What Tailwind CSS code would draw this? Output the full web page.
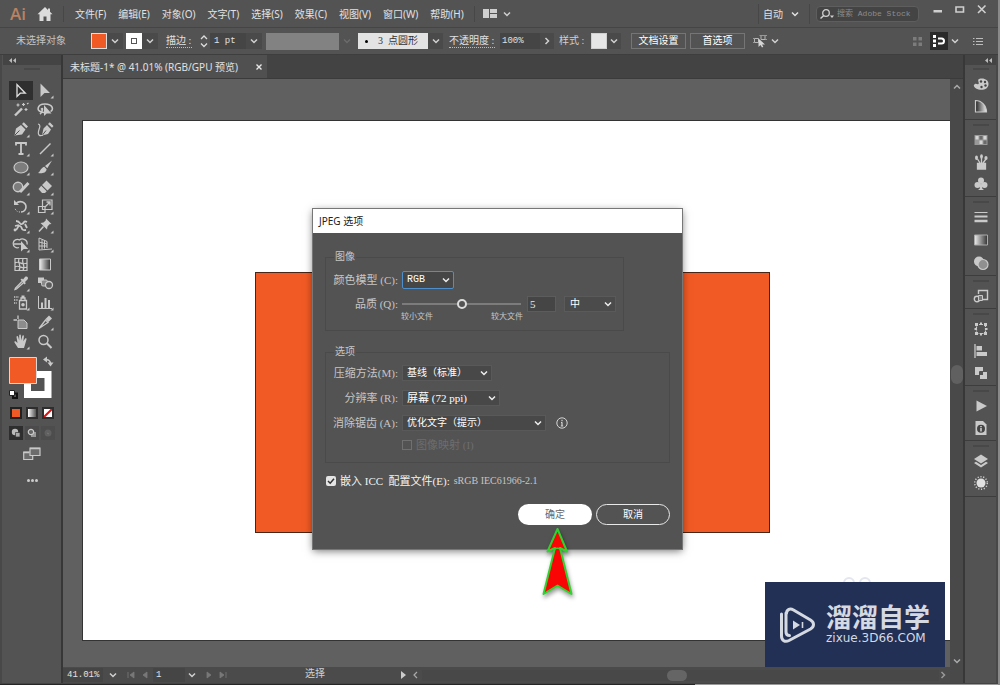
<!DOCTYPE html>
<html lang="zh-CN">
<head>
<meta charset="utf-8">
<title>JPEG 选项</title>
<script src="https://cdn.jsdelivr.net/npm/@tailwindcss/browser@4"></script>
</head>
<body class="h-screen overflow-hidden bg-[#2c2c2c] text-[#d0d0d0] text-[10px] leading-[14px] font-['Noto_Sans','Noto_Sans_CJK_SC',sans-serif]">

<!-- shared icons -->
<svg class="absolute size-0">
  <symbol id="chev" viewBox="0 0 8 8"><path d="M1 2.5 4 5.5 7 2.5" fill="none" stroke="currentColor" stroke-width="1.5"/></symbol>
  <symbol id="corner" viewBox="0 0 20 19"><path d="M18.5 14.5v3h-3z" fill="currentColor"/></symbol>
  <linearGradient id="g1"><stop offset="0" stop-color="#eee"/><stop offset="1" stop-color="#333"/></linearGradient>
  <linearGradient id="g2"><stop offset="0" stop-color="#222"/><stop offset="1" stop-color="#eee"/></linearGradient>
</svg>

<div class="flex h-full flex-col border-r-2 border-r-[#8a8a8a] bg-[#535353]">

  <!-- menu bar -->
  <header class="flex h-7 shrink-0 items-center border-b border-[#454545] pl-2.5 pr-2.5">
    <span class="w-[18px] font-['Open_Sans',sans-serif] text-[17px] font-semibold leading-6 text-[#b98262]">Ai</span>
    <button aria-label="主页" class="ml-[9px]"><svg class="size-4" viewBox="0 0 16 16"><path fill="#dcdcdc" d="M8 1 .5 8.200h2V15H6.500v-4.500h3V15h4V8.200h2L13 5.800V2.500h-2v1.400z"/></svg></button>
    <span class="ml-2.5 h-4 w-px bg-[#474747]"></span>
    <nav class="ml-[11px] flex gap-3 whitespace-nowrap text-[#e2e2e2]">
      <button>文件(F)</button><button>编辑(E)</button><button>对象(O)</button><button>文字(T)</button><button>选择(S)</button><button>效果(C)</button><button>视图(V)</button><button>窗口(W)</button><button>帮助(H)</button>
    </nav>
    <span class="ml-2.5 h-4 w-px bg-[#474747]"></span>
    <button aria-label="排列文档" class="ml-2 flex items-center gap-1.5"><svg class="h-[9px] w-[14px]" viewBox="0 0 14 9"><path fill="#cfcfcf" d="M0 0h6v9H0zM7 0h7v4H7zM7 5h7v4H7z"/></svg><svg class="size-2"><use href="#chev"/></svg></button>
    <div class="ml-auto flex items-center">
      <span class="h-5 w-px bg-[#474747]"></span>
      <button class="ml-1 flex items-center gap-2 text-[#e0e0e0]">自动 <svg class="size-2"><use href="#chev"/></svg></button>
      <span class="ml-2.5 h-5 w-px bg-[#474747]"></span>
      <label class="ml-1.5 flex h-4 w-[103px] items-center rounded-sm border border-[#5e5e5e] bg-[#444] pl-[2px]">
        <svg class="h-3 w-4 shrink-0" viewBox="0 0 16 12"><circle cx="7" cy="5" r="3.300" fill="none" stroke="#d0d0d0" stroke-width="1.300"/><path d="M4.800 7.500 1.500 10.500" stroke="#d0d0d0" stroke-width="1.500"/><path d="M11 7.500h4l-2 2.500z" fill="#d0d0d0"/></svg>
        <input aria-label="搜索 Adobe Stock" placeholder="搜索 Adobe Stock" class="w-full min-w-0 bg-transparent pl-0.5 font-['Liberation_Mono','Noto_Sans_CJK_SC',monospace] text-[8px] text-[#ddd] outline-none placeholder:text-[#8c8c8c]">
      </label>
      <button aria-label="最小化" class="ml-[13px] -mt-2"><svg class="h-3 w-3" viewBox="0 0 12 12"><path d="M1.500 6h8.500v2.500H1.500z" fill="#cfcfcf"/></svg></button>
      <button aria-label="最大化" class="ml-2.5 -mt-2"><svg class="h-3 w-3" viewBox="0 0 12 12"><path d="M2 3h7.500v5H2z" fill="none" stroke="#cfcfcf" stroke-width="1.600"/></svg></button>
      <button aria-label="关闭" class="ml-2.5 -mt-2"><svg class="h-3 w-3" viewBox="0 0 12 12"><path d="M2 1.500l7.500 7.500M9.500 1.500 2 9" stroke="#cfcfcf" stroke-width="1.600"/></svg></button>
    </div>
  </header>

  <!-- control bar -->
  <section class="flex h-[27px] shrink-0 items-center whitespace-nowrap border-b border-[#3e3e3e] pl-4 pr-[15px] font-['Liberation_Serif','Noto_Sans_CJK_SC',serif]">
    <span class="w-[75px] text-[#c4c4c4]">未选择对象</span>
    <button aria-label="填色" class="size-4 border border-[#ddd] bg-[#f15a24]"></button>
    <button aria-label="填色选项" class="flex h-4 w-4 items-center justify-center bg-[#4a4a4a]"><svg class="size-2"><use href="#chev"/></svg></button>
    <button aria-label="描边颜色" class="ml-[3px] flex size-4 items-center justify-center bg-white"><span class="size-[6px] border border-[#555]"></span></button>
    <button aria-label="描边选项" class="flex h-4 w-4 items-center justify-center bg-[#4a4a4a]"><svg class="size-2"><use href="#chev"/></svg></button>
    <label for="sw" class="ml-2 w-[26px] border-b border-dotted border-[#bbb] leading-3 text-[#e0e0e0]">描边 :</label>
    <svg class="ml-2 h-4 w-2" viewBox="0 0 8 16"><path d="M1 6 4 3 7 6M1 10.500 4 13.500 7 10.500" fill="none" stroke="#ddd" stroke-width="1.300"/></svg>
    <input id="sw" value="1 pt" class="ml-0.5 h-4 w-9 bg-[#454545] pl-1 font-['Liberation_Mono',monospace] text-[9px] text-[#e0e0e0]">
    <button aria-label="描边粗细" class="flex h-4 w-4 items-center justify-center bg-[#4a4a4a]"><svg class="size-2"><use href="#chev"/></svg></button>
    <span class="ml-1 h-[17px] w-[73px] bg-[#828282]"></span>
    <svg class="ml-1 size-2 text-[#6b6b6b]"><use href="#chev"/></svg>
    <button class="ml-[7px] flex h-4 w-[70px] items-center gap-2 bg-[#e3e3e3] pl-[7px] text-[#333]"><span class="size-[3px] rounded-full bg-black"></span><span class="pl-0.5">3&nbsp; 点圆形</span></button>
    <button aria-label="画笔" class="flex h-4 w-[15px] items-center justify-center bg-[#4a4a4a]"><svg class="size-2"><use href="#chev"/></svg></button>
    <label for="op" class="ml-1.5 w-[46px] border-b border-dotted border-[#bbb] leading-3 text-[#e0e0e0]">不透明度 :</label>
    <input id="op" value="100%" class="ml-[5px] h-4 w-10 bg-[#454545] pl-0.5 font-['Liberation_Mono',monospace] text-[9px] text-[#e0e0e0]">
    <button aria-label="不透明度滑块" class="flex h-4 w-[14px] items-center justify-center bg-[#4a4a4a]"><svg class="size-2 -rotate-90"><use href="#chev"/></svg></button>
    <span class="ml-[5px] w-8">样式 :</span>
    <button aria-label="图形样式" class="size-4 border border-[#d0d0d0] bg-[#e6e6e6]"></button>
    <button aria-label="样式选项" class="flex h-4 w-[14px] items-center justify-center bg-[#4a4a4a]"><svg class="size-2"><use href="#chev"/></svg></button>
    <button class="ml-2.5 h-4 w-[55px] border border-[#757575] leading-3 text-white">文档设置</button>
    <button class="ml-1 h-4 w-[55px] border border-[#757575] leading-3 text-white">首选项</button>
    <button aria-label="选择类似对象" class="ml-2 flex items-center gap-1"><svg class="h-[14px] w-[14px]" viewBox="0 0 14 14"><path d="M1.500 4.500h4v4h-4zM8 1.500h4v4H8z" fill="none" stroke="#b5b5b5"/><path d="M0 4.500h1M0 8.500h1M6.500 1.500h7.500M12 5.500h2" stroke="#999"/><path d="M5.500 4.500v8.500l2-2 1.500 2.500 1.300-.8L9 10.500h3z" fill="#d5d5d5"/></svg><svg class="size-2"><use href="#chev"/></svg></button>
    <div class="ml-auto flex items-center">
      <svg class="h-[9px] w-[9px] text-[#7c7c7c]" viewBox="0 0 9 9"><path d="M0 0h3.500v3.500H0zM5.500 0H9v3.500H5.500zM0 5.500h3.500V9H0zM5.500 5.500H9V9H5.500z" fill="currentColor"/></svg>
      <button aria-label="对齐像素" class="ml-2 flex h-[18px] w-[18px] items-center justify-center bg-[#2a2a2a]"><svg class="h-3 w-3" viewBox="0 0 12 12"><path d="M0 0h3v3H0zM0 4.500h3v3H0zM0 9h3v3H0z" fill="#fff"/><path d="M5 3.500h3.500a2.500 2.500 0 0 1 0 5H5" fill="none" stroke="#fff" stroke-width="2"/></svg></button>
      <svg class="ml-[3px] size-2"><use href="#chev"/></svg>
      <svg class="ml-3.5 h-[9px] w-[10px]" viewBox="0 0 10 9"><path d="M0 1.500h1.500M3 1.500h7M0 4.500h1.500M3 4.500h7M0 7.500h1.500M3 7.500h7" stroke="#bdbdbd" stroke-width="1.200"/></svg>
    </div>
  </section>

  <div class="flex min-h-0 flex-1">

    <!-- tool panel -->
    <aside class="flex w-[63px] shrink-0 flex-col border-l-2 border-r-2 border-l-[#484848] border-r-[#373737] pl-px text-[#c9c9c9]">
      <div class="flex h-2.5 items-center bg-[#444] pl-1.5"><svg class="h-[5px] w-[7px]" viewBox="0 0 7 5"><path d="M3 0v5L0 2.500zM7 0v5L4 2.500z" fill="#bbb"/></svg></div>
      <div class="mx-auto mt-[3px] h-0.5 w-4 bg-[#484848]"></div>
      <div class="mt-[11px] grid h-[270px] shrink-0 grid-cols-[24px_24px] grid-rows-14 pl-1.5">
        <button aria-label="选择" class="flex items-center justify-center bg-[#2f2f2f]"><svg class="h-[19px] w-5" viewBox="0 0 20 19"><path d="M6 3.500v12l3.300-3.300h5z" fill="none" stroke="#e0e0e0" stroke-width="1.300"/></svg></button>
        <button aria-label="直接选择" class="flex items-center justify-center"><svg class="h-[19px] w-5" viewBox="0 0 20 19"><path d="M5.500 2.500v13.500l4-4h5.500z" fill="currentColor"/><use href="#corner"/></svg></button>
        <button aria-label="魔棒" class="flex items-center justify-center"><svg class="h-[19px] w-5" viewBox="0 0 20 19"><path d="M4 15.500 11 8.500" stroke="currentColor" stroke-width="2.400"/><path d="M12.500 3v3M11 4.500h3M7 3.500v3M5.500 5h3M15 8v3M13.500 9.500h3M16 4l1.500-1" stroke="currentColor" stroke-width="1.200"/></svg></button>
        <button aria-label="套索" class="flex items-center justify-center"><svg class="h-[19px] w-5" viewBox="0 0 20 19"><path d="M9 12.500C0 12 2 4 10 4s9 6 5.500 7.500M6 9.500c3-3 1 3-1 4.500" fill="none" stroke="currentColor" stroke-width="1.600"/><path d="M9 5v11l2.700-2.500h4.800z" fill="currentColor"/></svg></button>
        <button aria-label="钢笔" class="flex items-center justify-center"><svg class="h-[19px] w-5" viewBox="0 0 20 19"><path d="M3.500 15.500 5 8.500 10 5l4.500 4.500L11 14.500zM11 4l1.800-1.800L17 6.500 15.300 8.300z" fill="currentColor"/><path d="M4 15 8.500 10.500" stroke="#535353"/><use href="#corner"/></svg></button>
        <button aria-label="曲率" class="flex items-center justify-center"><svg class="h-[19px] w-5" viewBox="0 0 20 19"><path d="M7 15.500 8.500 8.500 12 5l4 4.500-3 4.500zM13 4l1.800-1.800L18.500 6 17 7.800z" fill="currentColor"/><path d="M7.500 15 11 10.500" stroke="#535353"/><path d="M3 4c5 1-2 8 1 11 1 1 3 .5 4 0" fill="none" stroke="currentColor" stroke-width="1.200"/></svg></button>
        <button aria-label="文字" class="flex items-center justify-center"><svg class="h-[19px] w-5" viewBox="0 0 20 19"><path d="M5 6.500V4h10v2.500M10 4v11M7.500 15h5" fill="none" stroke="currentColor" stroke-width="1.800"/><use href="#corner"/></svg></button>
        <button aria-label="直线段" class="flex items-center justify-center"><svg class="h-[19px] w-5" viewBox="0 0 20 19"><path d="M5 15 15.500 4.500" stroke="currentColor" stroke-width="1.400"/><use href="#corner"/></svg></button>
        <button aria-label="椭圆" class="flex items-center justify-center"><svg class="h-[19px] w-5" viewBox="0 0 20 19"><ellipse cx="10" cy="9.500" rx="7" ry="5.500" fill="#7d7d7d" stroke="currentColor" stroke-width="1.200"/><use href="#corner"/></svg></button>
        <button aria-label="画笔" class="flex items-center justify-center"><svg class="h-[19px] w-5" viewBox="0 0 20 19"><path d="M17 2.500 10 8l2.300 2.300zM9.300 8.800l2.300 2.400c-.5 4-5 4.500-8.600 3.800 2-.5 2.500-5 6.300-6.200z" fill="currentColor"/><use href="#corner"/></svg></button>
        <button aria-label="Shaper" class="flex items-center justify-center"><svg class="h-[19px] w-5" viewBox="0 0 20 19"><circle cx="7" cy="9" r="4.700" fill="#7d7d7d" stroke="currentColor" stroke-width="1.400"/><path d="M17.500 5 9 14" stroke="currentColor" stroke-width="3"/><use href="#corner"/></svg></button>
        <button aria-label="橡皮擦" class="flex items-center justify-center"><svg class="h-[19px] w-5" viewBox="0 0 20 19"><path d="M11.500 2.500 17 8l-4.500 4.500L7 7zM6.200 7.800l5.500 5.500L10 15H7l-3.500-4z" fill="currentColor"/><use href="#corner"/></svg></button>
        <button aria-label="旋转" class="flex items-center justify-center"><svg class="h-[19px] w-5" viewBox="0 0 20 19"><path d="M5 6.500c4-4 10-1 10 3.500 0 2.500-2 5-5 5" fill="none" stroke="currentColor" stroke-width="1.600"/><path d="M3 3v5h5z" fill="currentColor"/><path d="M9 15c-3 0-5-2-5-4.500" fill="none" stroke="currentColor" stroke-dasharray="1 1.500"/><use href="#corner"/></svg></button>
        <button aria-label="比例缩放" class="flex items-center justify-center"><svg class="h-[19px] w-5" viewBox="0 0 20 19"><path d="M7.500 3h9.500v9.500H7.500zM3.500 9.500h6.500v6H3.500z" fill="none" stroke="currentColor" stroke-width="1.200"/><path d="M10 10 14.500 5.500M11.500 5H15v3.500" fill="none" stroke="currentColor" stroke-width="1.300"/><use href="#corner"/></svg></button>
        <button aria-label="宽度" class="flex items-center justify-center"><svg class="h-[19px] w-5" viewBox="0 0 20 19"><path d="M4 14c4-1 2-5 5-4s0 5 6 4M5 5c5 0 3 4 6 3s1-4 5-2M4 10l4-1M14 8l2 4" fill="none" stroke="currentColor" stroke-width="1.800"/><circle cx="4" cy="14" r="1.400" fill="currentColor"/><use href="#corner"/></svg></button>
        <button aria-label="操控变形" class="flex items-center justify-center"><svg class="h-[19px] w-5" viewBox="0 0 20 19"><path d="M11 2.500 16.500 8l-2 .3-2 2.200-.5 3-6.500-6.500 3-.5L10.700 4.500z" fill="currentColor"/><path d="M8.500 10.500 4 15.500" stroke="currentColor" stroke-width="1.500"/><use href="#corner"/></svg></button>
        <button aria-label="形状生成器" class="flex items-center justify-center"><svg class="h-[19px] w-5" viewBox="0 0 20 19"><path d="M8 12.500a4.200 4.200 0 1 1 .5-7.500c3-2.500 8.500 0 7.500 4.500M3 9h9" fill="none" stroke="currentColor" stroke-width="1.300"/><path d="M10 6v10.500l2.700-2.500h4.500z" fill="currentColor"/><use href="#corner"/></svg></button>
        <button aria-label="透视网格" class="flex items-center justify-center"><svg class="h-[19px] w-5" viewBox="0 0 20 19"><path d="M4 3v12l13-1M4 3l8 3.500v6.500M4 7l8 2M4 11h8M7 4.500V14M9.500 5.500V13.500" fill="none" stroke="currentColor"/><use href="#corner"/></svg></button>
        <button aria-label="网格" class="flex items-center justify-center"><svg class="h-[19px] w-5" viewBox="0 0 20 19"><path d="M4 3.500h12v12H4zM4 8c4-3 6 3 12 0M4 12c4-3 6 3 12 0M8 3.500c-2 4 3 7 0 12M12 3.500c-2 4 3 7 0 12" fill="none" stroke="currentColor" stroke-width="1.200"/></svg></button>
        <button aria-label="渐变" class="flex items-center justify-center"><svg class="h-[19px] w-5" viewBox="0 0 20 19"><path d="M4.500 4h11v11h-11z" fill="url(#g1)" stroke="currentColor"/></svg></button>
        <button aria-label="吸管" class="flex items-center justify-center"><svg class="h-[19px] w-5" viewBox="0 0 20 19"><path d="M11 7.500 4.500 14 4 15.500 5.500 15 12.500 8.800" fill="none" stroke="currentColor" stroke-width="1.300"/><path d="M9.500 5.500 11 4.500l1 1L14 3c2-1.500 4 1 2.500 2.500L14 8l.8 1.200L13.500 10.500z" fill="currentColor"/><use href="#corner"/></svg></button>
        <button aria-label="混合" class="flex items-center justify-center"><svg class="h-[19px] w-5" viewBox="0 0 20 19"><path d="M3 3.500h6v5.500H3z" fill="currentColor"/><rect x="6.500" y="6" width="6" height="6" rx="1.500" fill="#888" stroke="currentColor"/><circle cx="14" cy="11" r="3.500" fill="#5c5c5c" stroke="currentColor" stroke-width="1.300"/></svg></button>
        <button aria-label="符号喷枪" class="flex items-center justify-center"><svg class="h-[19px] w-5" viewBox="0 0 20 19"><path d="M8.500 7.500h7V16h-7zM10 7V5h4v2" fill="none" stroke="currentColor" stroke-width="1.300"/><circle cx="12" cy="11.700" r="1.800" fill="currentColor"/><path d="M10.500 2.500h3V5h-3z" fill="currentColor"/><path d="M3 4h5M3 7h4M3 10h3" stroke="currentColor" stroke-width="1.300" stroke-dasharray="1.300 1"/><use href="#corner"/></svg></button>
        <button aria-label="柱形图" class="flex items-center justify-center"><svg class="h-[19px] w-5" viewBox="0 0 20 19"><path d="M3.500 3v12.500H17" fill="none" stroke="currentColor"/><path d="M6 9.500h2V15H6zM9.500 5h2v10h-2zM13 7h2v8h-2z" fill="currentColor"/><use href="#corner"/></svg></button>
        <button aria-label="画板" class="flex items-center justify-center"><svg class="h-[19px] w-5" viewBox="0 0 20 19"><path d="M7 7h6l3 3v5.500H7z" fill="#8c8c8c" stroke="currentColor"/><path d="M7 2.500V6M2.500 7H6" stroke="currentColor" stroke-width="1.300"/></svg></button>
        <button aria-label="切片" class="flex items-center justify-center"><svg class="h-[19px] w-5" viewBox="0 0 20 19"><path d="M4 15.500 10.500 7l2.500 2.500z" fill="none" stroke="currentColor" stroke-width="1.300"/><path d="M10.500 6 14 2.500 17 5.500 13.500 9z" fill="currentColor"/><use href="#corner"/></svg></button>
        <button aria-label="抓手" class="flex items-center justify-center"><svg class="h-[19px] w-5" viewBox="0 0 20 19"><path d="M7 16 3.500 10.500c-.5-1.300 1-1.600 1.600-.8L6.500 11 5.500 5c0-1.200 1.500-1.200 1.700 0L8.200 8.500V3.500c0-1.300 1.700-1.300 1.700 0l.3 5 1.100-4.500c.4-1.100 1.800-.7 1.600.5L12.300 9.200l1.700-2.500c.7-.9 1.900-.2 1.500.8L13 16z" fill="currentColor"/><use href="#corner"/></svg></button>
        <button aria-label="缩放" class="flex items-center justify-center"><svg class="h-[19px] w-5" viewBox="0 0 20 19"><circle cx="8.500" cy="8" r="4.500" fill="none" stroke="currentColor" stroke-width="1.500"/><path d="M11.800 11.300 16.500 16" stroke="currentColor" stroke-width="2"/></svg></button>
      </div>
      <!-- fill and stroke -->
      <svg class="mt-[5px] ml-1.5 h-11 w-[46px] shrink-0" viewBox="0 0 46 44">
        <path d="M18.500 18.500h20.500v20h-20.500z" fill="#535353" stroke="#fff" stroke-width="7"/>
        <path d="M.5 1.500h27v26H.5z" fill="#f15a24" stroke="#d8d8d8"/>
        <path d="M36.500 4c3-1 5 1 5 4" fill="none" stroke="#c9c9c9" stroke-width="1.600"/><path d="M38 .5v6L34 3.500zM38.500 6.500h6l-3 4z" fill="#c9c9c9"/>
        <path d="M4 37.500h4v4.500H4z" fill="none" stroke="#111" stroke-width="2"/><path d="M.5 34.500h5v5h-5z" fill="#fff" stroke="#222"/>
      </svg>
      <div class="mt-[7px] flex justify-between pr-[7px] pl-[7px]">
        <button aria-label="颜色" class="size-3 border-2 border-[#222] bg-[#f15a24]"></button>
        <button aria-label="渐变" class="size-3 border-2 border-[#2e2e2e] bg-linear-to-r from-white to-[#555]"></button>
        <button aria-label="无" class="size-3 border-2 border-[#2e2e2e] bg-white"><svg class="size-2" viewBox="0 0 8 8"><path d="M0 8 8 0" stroke="#e01010" stroke-width="2"/></svg></button>
      </div>
      <div class="mt-[7px] flex justify-between pr-1.5 pl-1.5">
        <button aria-label="正常绘图" class="flex size-[14px] items-center justify-center bg-[#2e2e2e]"><svg class="h-2.5 w-2.5" viewBox="0 0 10 10"><circle cx="4" cy="4" r="3.200" fill="#bbb"/><path d="M4.500 4.500h4.500v4.500H4.500z" fill="#aaa" stroke="#333" stroke-width=".7"/></svg></button>
        <button aria-label="背面绘图" class="flex size-[14px] items-center justify-center bg-[#4b4b4b]"><svg class="h-2.5 w-2.5" viewBox="0 0 10 10"><path d="M4 4h5v5H4z" fill="#999"/><circle cx="4" cy="4" r="2.700" fill="#666" stroke="#ccc" stroke-width="1.200"/></svg></button>
        <button aria-label="内部绘图" class="flex size-[14px] items-center justify-center bg-[#4d4d4d]"><svg class="h-2.5 w-2.5" viewBox="0 0 10 10"><circle cx="5" cy="5" r="3.500" fill="#606060"/><path d="M4 5l2 1" stroke="#777"/></svg></button>
      </div>
      <button aria-label="更改屏幕模式" class="mx-auto mt-[7px]"><svg class="h-[14px] w-[18px]" viewBox="0 0 18 14"><path d="M.7 5h9v7.500h-9z" fill="#6c6c6c" stroke="#c9c9c9" stroke-width="1.200"/><path d="M7 1h10v7.500H7z" fill="#6c6c6c" stroke="#c9c9c9" stroke-width="1.200"/><path d="M7 1.500h10M.7 5.500H6" stroke="#c9c9c9" stroke-width="1.500"/></svg></button>
      <button aria-label="编辑工具栏" class="mx-auto mt-3.5 flex h-[10px] items-center gap-px"><i class="size-[3px] rounded-full bg-[#ccc]"></i><i class="size-[3px] rounded-full bg-[#ccc]"></i><i class="size-[3px] rounded-full bg-[#ccc]"></i></button>
    </aside>

    <!-- document window -->
    <main class="flex min-w-0 flex-1 flex-col">
      <div class="flex h-6 shrink-0 border-b border-[#3b3b3b] bg-[#434343]">
        <div class="flex w-[204px] items-center bg-[#505050] pl-[7px] text-[#e2e2e2]">
          <span class="whitespace-nowrap">未标题-1* @ 41.01% (RGB/GPU 预览)</span>
          <button aria-label="关闭文档" class="ml-auto mr-1"><svg class="size-2" viewBox="0 0 8 8"><path d="M1.500 1.500l5 5M6.500 1.500l-5 5" stroke="#e8e8e8" stroke-width="1.400"/></svg></button>
        </div>
      </div>
      <div class="flex min-h-0 flex-1">
        <div class="flex min-w-0 flex-1 flex-col">
          <div class="flex flex-1 bg-[#606060] pt-[41px] pb-[26px] pl-[19px]">
            <div class="flex-1 border border-r-0 border-[#333] bg-white"></div>
          </div>
          <!-- status bar -->
          <div class="flex h-4 shrink-0 items-center bg-[#4b4b4b] font-['Liberation_Mono','Noto_Sans_CJK_SC',monospace] text-[9px]">
            <input aria-label="缩放比例" value="41.01%" class="h-[14px] w-10 bg-[#454545] pl-1 text-[#e2e2e2]">
            <svg class="ml-1.5 size-2"><use href="#chev"/></svg>
            <svg class="ml-2.5 h-2 w-6 text-[#787878]" viewBox="0 0 24 8"><path d="M1 1v6M7 1 3 4l4 3zM20 1 16 4l4 3z" fill="currentColor" stroke="currentColor" stroke-width=".8"/></svg>
            <input aria-label="画板" value="1" class="ml-0.5 h-[14px] w-8 bg-[#454545] pl-[3px] text-[#e2e2e2]">
            <svg class="ml-[3px] size-2"><use href="#chev"/></svg>
            <svg class="ml-2.5 h-2 w-6 text-[#787878]" viewBox="0 0 24 8"><path d="M1 1 5 4 1 7zM14 1l4 3-4 3zM20 1v6" fill="currentColor" stroke="currentColor" stroke-width=".8"/></svg>
            <span class="w-[170px] text-center text-[10px]">选择</span>
            <svg class="h-2 w-[18px]" viewBox="0 0 18 8"><path d="M1 0l5 4-5 4z" fill="#ccc"/><path d="M17 1 14 4l3 3" fill="none" stroke="#aaa" stroke-width="1.200"/></svg>
            <div class="ml-1 flex flex-1 items-center justify-center bg-[#484848] pr-2"><span class="h-[11px] w-5 rounded-full bg-[#656565]"></span></div>
            <svg class="mr-[3px] size-2 -rotate-90 text-[#999]"><use href="#chev"/></svg>
          </div>
        </div>
        <div class="flex w-[13px] shrink-0 flex-col items-center justify-between bg-[#494949] pt-1 pb-1 text-[#aaa]">
          <svg class="size-2 rotate-180"><use href="#chev"/></svg>
          <span class="h-[19px] w-3 rounded-full bg-[#606060]"></span>
          <svg class="mb-3.5 size-2"><use href="#chev"/></svg>
        </div>
      </div>
    </main>

    <!-- panel dock -->
    <aside class="flex w-[35px] shrink-0 flex-col border-l-2 border-r-2 border-l-[#383838] border-r-[#484848] text-[#cacaca]">
      <div class="flex h-2.5 shrink-0 items-center justify-end bg-[#444] pr-1"><svg class="h-[5px] w-[7px]" viewBox="0 0 7 5"><path d="M3 0v5L0 2.500zM7 0v5L4 2.500z" fill="#bbb"/></svg></div>
      <div class="flex flex-col items-center border-b border-[#3d3d3d] pb-0.5">
        <span class="mt-[3px] mb-[3px] h-0.5 w-4 bg-[#484848]"></span>
        <button aria-label="颜色" class="flex h-[22px] items-center"><svg class="size-4" viewBox="0 0 16 16"><path d="M6 3c5-1.500 9.500 1 9.500 5 0 5-5 6.500-10 5.500C1 12.500-.5 9 2 8c1.500-.6 2.500 1 3.500 0S4 4 6 3z" fill="currentColor"/><circle cx="8" cy="5.500" r="1.200" fill="#444"/><circle cx="12" cy="6" r="1.200" fill="#444"/><circle cx="12.500" cy="9.500" r="1.200" fill="#444"/><circle cx="8.500" cy="11" r="1.200" fill="#444"/></svg></button>
        <button aria-label="颜色参考" class="flex h-[22px] items-center"><svg class="size-4" viewBox="0 0 16 16"><path d="M2.500 2.500c6 0 11 5 11 11.500h-11z" fill="url(#g2)" stroke="currentColor" stroke-width="1.200"/></svg></button>
      </div>
      <div class="flex flex-col items-center border-b border-[#3d3d3d] pb-px">
        <span class="mt-[4px] mb-[3px] h-0.5 w-4 bg-[#484848]"></span>
        <button aria-label="色板" class="flex h-[22px] items-center"><svg class="size-4" viewBox="0 0 16 16"><path d="M1.500 3h13v10h-13z" fill="#999"/><path d="M2.500 4h3v3.500h-3zM10.500 4h3v3.500h-3zM6.500 8.500h3V12h-3z" fill="#d5d5d5"/><path d="M6.500 4h3v3.500h-3zM10.500 8.500h3V12h-3z" fill="#6a6a6a"/></svg></button>
        <button aria-label="画笔" class="flex h-[22px] items-center"><svg class="size-4" viewBox="0 0 16 16"><path d="M4.500 9.500h8V15h-8zM7 9 4.500 5M8.500 9V4M10 9l3-4" stroke="currentColor" stroke-width="1.300" fill="currentColor"/><ellipse cx="3.500" cy="3.800" rx="1.500" ry="2.300" fill="currentColor"/><ellipse cx="8.500" cy="2.500" rx="1.400" ry="2.200" fill="currentColor"/><ellipse cx="13" cy="4" rx="1.600" ry="2" fill="currentColor"/></svg></button>
        <button aria-label="符号" class="flex h-[22px] items-center"><svg class="size-4" viewBox="0 0 16 16"><circle cx="8" cy="4.500" r="3" fill="currentColor"/><circle cx="4.500" cy="9" r="3" fill="currentColor"/><circle cx="11.500" cy="9" r="3" fill="currentColor"/><path d="M7.300 6h1.400l.5 6.500L11 14H5l1.800-1.500z" fill="currentColor"/></svg></button>
      </div>
      <div class="flex flex-col items-center border-b border-[#3d3d3d] pb-px">
        <span class="mt-[4px] mb-[2px] h-0.5 w-4 bg-[#484848]"></span>
        <button aria-label="描边" class="flex h-[23px] items-center"><svg class="size-4" viewBox="0 0 16 16"><path d="M1.500 3.500h13" stroke="currentColor"/><path d="M1.500 7.500h13" stroke="currentColor" stroke-width="2"/><path d="M1.500 12h13" stroke="currentColor" stroke-width="2.500"/></svg></button>
        <button aria-label="渐变" class="flex h-[23px] items-center"><svg class="size-4" viewBox="0 0 16 16"><path d="M1.500 3h13v10h-13z" fill="url(#g1)" stroke="#aaa"/></svg></button>
        <button aria-label="透明度" class="flex h-[23px] items-center"><svg class="size-4" viewBox="0 0 16 16"><circle cx="6" cy="6.500" r="5" fill="currentColor"/><circle cx="10" cy="9.500" r="5" fill="#909090" stroke="currentColor" stroke-width="1.200"/></svg></button>
      </div>
      <div class="flex flex-col items-center border-b border-[#3d3d3d] pb-px">
        <span class="mt-[4px] mb-[3px] h-0.5 w-4 bg-[#484848]"></span>
        <button aria-label="资源导出" class="flex h-[22px] items-center"><svg class="size-4" viewBox="0 0 16 16"><path d="M5.500 6V2.500h9v9H10" fill="none" stroke="currentColor" stroke-width="1.400"/><circle cx="4" cy="11" r="2.700" fill="none" stroke="currentColor" stroke-width="1.400"/><path d="M5.500 7.500h4v5h-4z" fill="#777" stroke="currentColor"/></svg></button>
      </div>
      <div class="flex flex-col items-center border-b border-[#3d3d3d] pb-px">
        <span class="mt-[4px] mb-[3px] h-0.5 w-4 bg-[#484848]"></span>
        <button aria-label="变换" class="flex h-[22px] items-center"><svg class="size-4" viewBox="0 0 16 16"><path d="M3.500 3.500h9v9h-9z" fill="none" stroke="currentColor" stroke-width="1.200" stroke-dasharray="1.500 1"/><path d="M2 2h3v3H2zM11 2h3v3h-3zM2 11h3v3H2zM11 11h3v3h-3zM7 1.500h2V4H7zM7 12h2v2.500H7zM1.500 7H4v2H1.500zM12 7h2.500v2H12z" fill="currentColor"/></svg></button>
        <button aria-label="对齐" class="flex h-[22px] items-center"><svg class="size-4" viewBox="0 0 16 16"><path d="M2 1v14" stroke="currentColor" stroke-width="1.300"/><path d="M3.500 3H9v4.500H3.500zM3.500 9H14v4H3.500z" fill="currentColor"/></svg></button>
        <button aria-label="路径查找器" class="flex h-[22px] items-center"><svg class="size-4" viewBox="0 0 16 16"><path d="M2 2h8v8H2z" fill="currentColor"/><path d="M6.500 6.500h8v8h-8z" fill="currentColor" stroke="#535353"/><path d="M7 7h3v3H7z" fill="#535353"/></svg></button>
      </div>
      <div class="flex flex-col items-center border-b border-[#3d3d3d] pb-px">
        <span class="mt-[4px] mb-[3px] h-0.5 w-4 bg-[#484848]"></span>
        <button aria-label="动作" class="flex h-[22px] items-center"><svg class="size-4" viewBox="0 0 16 16"><path d="M3.500 2.500 14 8 3.500 13.500z" fill="currentColor"/></svg></button>
        <button aria-label="文档信息" class="flex h-[22px] items-center"><svg class="size-4" viewBox="0 0 16 16"><path d="M2.500 1H10l3.500 3.500V15h-11z" fill="currentColor"/><circle cx="8" cy="8.800" r="4" fill="#444"/><path d="M8 8v3.500M8 6v1.200" stroke="#ddd" stroke-width="1.400"/></svg></button>
      </div>
      <div class="flex flex-col items-center border-b border-[#3d3d3d] pb-0.5">
        <span class="mt-[4px] mb-[3px] h-0.5 w-4 bg-[#484848]"></span>
        <button aria-label="图层" class="flex h-[22px] items-center"><svg class="size-4" viewBox="0 0 16 16"><path d="M8 1.500 15 6 8 10.500 1 6z" fill="currentColor"/><path d="M3 8.800 8 12l5-3.200L15 10 8 14.500 1 10z" fill="currentColor"/></svg></button>
        <button aria-label="外观" class="flex h-[22px] items-center"><svg class="size-4" viewBox="0 0 16 16"><circle cx="8" cy="8" r="4.500" fill="#e0e0e0"/><circle cx="8" cy="8" r="6.300" fill="none" stroke="currentColor" stroke-width="1.500" stroke-dasharray="1.200 1.630"/></svg></button>
      </div>
    </aside>
  </div>
  <div class="h-px shrink-0 bg-[#444]"></div>
  <div class="flex h-px shrink-0 bg-[#262626]"><span class="ml-auto w-[303px] bg-[#9a9a9a]"></span></div>
</div>

<!-- artwork rectangle on the artboard -->
<div class="absolute left-[255px] top-[272px] h-[261px] w-[515px] border border-[#4a2414] bg-[#f15a24]"></div>

<!-- JPEG options dialog -->
<form class="absolute left-[313px] top-[209px] w-[369px] bg-[#535353] font-['Liberation_Serif','Noto_Sans_CJK_SC',serif] text-[11px] leading-[14px] text-[#c6c6c6] shadow-[0_2px_8px_rgba(0,0,0,0.55)] outline outline-[#777]">
  <h1 class="flex h-6 items-center bg-white pl-1.5 font-['Noto_Sans','Noto_Sans_CJK_SC',sans-serif] text-[10px] text-[#222]">JPEG 选项</h1>
  <div class="px-3 pt-[17px] pb-6">
    <fieldset class="w-[299px] border border-[#4a4a4a] pb-2">
      <legend class="ml-2 px-px text-[10px]">图像</legend>
      <div class="mt-[7px] flex h-[18px] items-center gap-1">
        <label for="cm" class="w-[72px] text-right">颜色模型 (C):</label>
        <span class="grid h-[18px] w-[52px] items-center">
          <select id="cm" class="col-start-1 row-start-1 h-full w-full appearance-none rounded-xs border border-[#4d8fcc] bg-[#464646] pl-1 font-['Liberation_Mono',monospace] text-[10px] text-white"><option>RGB</option><option>CMYK</option></select>
          <svg class="pointer-events-none col-start-1 row-start-1 mr-1 size-2 justify-self-end text-[#eee]"><use href="#chev"/></svg>
        </span>
      </div>
      <div class="mt-[7px] flex h-4 items-center gap-1">
        <label for="ql" class="w-[72px] text-right">品质 (Q):</label>
        <input id="ql" type="range" min="0" max="10" value="5" class="h-2.5 w-[119px] appearance-none bg-transparent [&::-webkit-slider-runnable-track]:h-0.5 [&::-webkit-slider-runnable-track]:bg-[#7c7c7c] [&::-webkit-slider-thumb]:-mt-1 [&::-webkit-slider-thumb]:size-2.5 [&::-webkit-slider-thumb]:appearance-none [&::-webkit-slider-thumb]:rounded-full [&::-webkit-slider-thumb]:border-2 [&::-webkit-slider-thumb]:border-[#dcdcdc] [&::-webkit-slider-thumb]:bg-[#535353]">
        <input aria-label="品质数值" value="5" class="ml-0.5 h-4 w-[29px] border border-[#5c5c5c] bg-[#454545] pl-0.5 text-[11px] text-[#e6e6e6]">
        <span class="ml-1 grid h-4 w-[52px] items-center">
          <select aria-label="品质等级" class="col-start-1 row-start-1 h-full w-full appearance-none border border-[#5a5a5a] bg-[#4b4b4b] pl-[5px] text-[10px] text-white"><option>中</option></select>
          <svg class="pointer-events-none col-start-1 row-start-1 mr-1 size-2 justify-self-end text-[#eee]"><use href="#chev"/></svg>
        </span>
      </div>
      <div class="ml-[75px] flex h-[10px] w-[122px] items-center justify-between text-[8px] leading-[10px]"><span>较小文件</span><span>较大文件</span></div>
    </fieldset>

    <fieldset class="mt-3.5 border border-[#4a4a4a] pb-2.5">
      <legend class="ml-2 px-px text-[10px]">选项</legend>
      <div class="mt-[6px] flex h-4 items-center gap-1">
        <label for="cp" class="w-[72px] text-right">压缩方法(M):</label>
        <span class="grid h-4 w-[90px] items-center">
          <select id="cp" class="col-start-1 row-start-1 h-full w-full appearance-none border border-[#595959] bg-[#484848] pl-1 text-[10px] text-white"><option>基线（标准）</option></select>
          <svg class="pointer-events-none col-start-1 row-start-1 mr-1 size-2 justify-self-end text-[#eee]"><use href="#chev"/></svg>
        </span>
      </div>
      <div class="mt-[9px] flex h-4 items-center gap-1">
        <label for="rs" class="w-[72px] text-right">分辨率 (R):</label>
        <span class="grid h-4 w-[98px] items-center">
          <select id="rs" class="col-start-1 row-start-1 h-full w-full appearance-none border border-[#595959] bg-[#484848] pl-1 text-[11px] text-white"><option>屏幕 (72 ppi)</option></select>
          <svg class="pointer-events-none col-start-1 row-start-1 mr-1 size-2 justify-self-end text-[#eee]"><use href="#chev"/></svg>
        </span>
      </div>
      <div class="mt-[9px] flex h-4 items-center gap-1">
        <label for="aa" class="w-[72px] text-right">消除锯齿 (A):</label>
        <span class="grid h-4 w-[144px] items-center">
          <select id="aa" class="col-start-1 row-start-1 h-full w-full appearance-none border border-[#595959] bg-[#484848] pl-1 text-[10px] text-white"><option>优化文字（提示）</option></select>
          <svg class="pointer-events-none col-start-1 row-start-1 mr-1 size-2 justify-self-end text-[#eee]"><use href="#chev"/></svg>
        </span>
        <svg class="ml-1.5 size-3" viewBox="0 0 12 12"><circle cx="6" cy="6" r="5.200" fill="none" stroke="#d5d5d5"/><path d="M6 5.200v3.600M6 2.800v1.400M5 5.500h1M4.800 9h2.400" stroke="#d5d5d5" stroke-width="1.200"/></svg>
      </div>
      <label class="ml-[76px] mt-[7px] flex h-[14px] items-center gap-1 text-[#6d6d6d]"><input type="checkbox" disabled class="size-2.5 appearance-none border border-[#707070]">图像映射 (I)</label>
    </fieldset>

    <div class="mt-[11px] flex h-[14px] items-center whitespace-nowrap">
      <span class="grid size-[11px] place-items-center">
        <input id="icc" type="checkbox" checked class="col-start-1 row-start-1 size-2.5 appearance-none rounded-xs bg-[#e4e4e4]">
        <svg class="pointer-events-none col-start-1 row-start-1 size-2" viewBox="0 0 8 8"><path d="M1 4l2.200 2.200L7 1.800" fill="none" stroke="#333" stroke-width="1.500"/></svg>
      </span>
      <label for="icc" class="ml-1 text-[#f2f2f2]">嵌入 ICC&nbsp; 配置文件(E):</label>
      <span class="ml-1 text-[10px]">sRGB IEC61966-2.1</span>
    </div>

    <div class="mt-4 flex justify-end gap-1 text-[10px]">
      <button type="button" class="h-[21px] w-[74px] rounded-full bg-white text-[#666]">确定</button>
      <button type="button" class="h-[21px] w-[74px] rounded-full border border-[#e8e8e8] text-white">取消</button>
    </div>
  </div>
</form>

<!-- pointer arrow -->
<svg class="absolute left-[539px] top-[525px] h-[75px] w-9 drop-shadow-[1px_3px_2px_rgba(0,0,0,0.4)]" viewBox="0 0 36 75">
  <path d="M18.500 4 28 26.500 21 23 32.500 69 18.500 60.500 4.500 69 16 23 8.500 26.500z" fill="#fa0505" stroke="#2fd32f" stroke-width="2" stroke-linejoin="round"/>
  <path d="M15 24.500q3.500-2.500 7 0" fill="none" stroke="#2fd32f" stroke-width="1.500"/>
</svg>

<!-- site badge -->
<svg class="absolute left-[840px] top-[575px] h-2 w-9" viewBox="0 0 36 8" fill="none" stroke="#e3e6ee" stroke-width="2"><circle cx="9" cy="8" r="5"/><circle cx="25" cy="8" r="5"/></svg>
<div class="absolute left-[765px] top-[582px] flex h-[85px] w-[180px] items-center bg-[#223056] pl-[15px] text-[#d5d9e2]">
  <svg class="h-9 w-[35px] shrink-0" viewBox="0 0 35 36"><path d="M6 6v19c0 2.500 1 3.500 3.500 3.500M1.500 7v22c0 4.500 3.500 6.500 7.500 4.500L30.500 22c4-2.500 4-6.500 0-9L13.500 3C9.500.8 6.500 3 6.500 6.500" fill="none" stroke="currentColor" stroke-width="3" stroke-linecap="round"/><path d="M13 13.500v9l7-4.500z" fill="currentColor"/><path d="M22.500 15v6" stroke="currentColor" stroke-width="1.600"/></svg>
  <div class="ml-[11px] mb-1 whitespace-nowrap">
    <div class="font-['Noto_Sans_CJK_SC',sans-serif] text-[26px] font-bold leading-[30px]">溜溜自学</div>
    <div class="font-['DejaVu_Sans',sans-serif] text-[12px] leading-[14px]">zixue.3D66.COM</div>
  </div>
</div>
</body>
</html>
